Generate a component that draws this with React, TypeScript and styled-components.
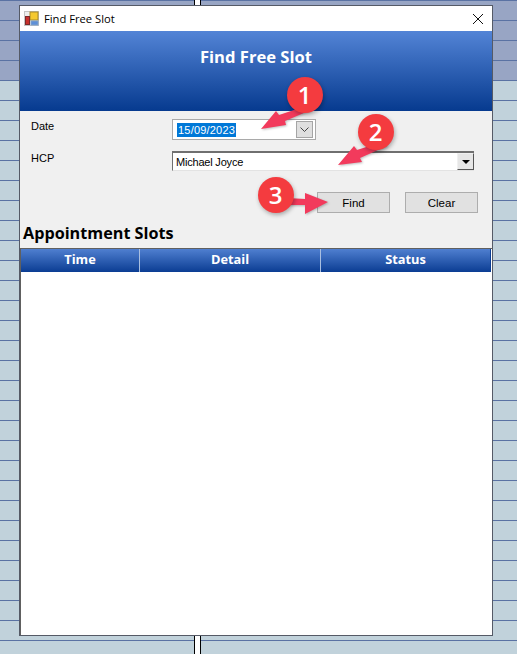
import styled, { createGlobalStyle } from "styled-components";

const GlobalStyle = createGlobalStyle`
  html, body {
    margin: 0;
    padding: 0;
  }
  * {
    box-sizing: border-box;
  }
`;

// the spreadsheet-looking app behind the dialog
const Desktop = styled.div`
  position: relative;
  width: 100%;
  height: 654px;
  overflow: hidden;
  padding: 5px 0 0 19px;
  font-family: "Liberation Sans", Arial, sans-serif;
  background:
    linear-gradient(
        to right,
        transparent 194px,
        #000 194px,
        #000 195px,
        #fff 195px,
        #fff 200px,
        #000 200px,
        #000 201px,
        transparent 201px
      ),
    repeating-linear-gradient(
      to bottom,
      #5a72a3 0,
      #5a72a3 1px,
      transparent 1px,
      transparent 20px
    ),
    linear-gradient(to bottom, #98a5c4 80px, #c1d2db 80px);
`;

const Dialog = styled.div`
  display: flex;
  flex-direction: column;
  width: 474px;
  height: 631px;
  border: 1px solid #555a66;
  background: #f0f0f0;
`;

const TitleBar = styled.div`
  display: flex;
  align-items: center;
  height: 25px;
  padding: 0 9px 0 4px;
  background: #fff;
`;

const TitleText = styled.span`
  margin-left: 5px;
  font-family: "Open Sans", sans-serif;
  font-size: 11.2px;
  color: #000;
  flex: 1;
`;

const Banner = styled.div`
  display: flex;
  align-items: center;
  justify-content: center;
  height: 80px;
  padding-bottom: 30px;
  background: linear-gradient(to bottom, #5384d6, #063a8f);
  color: #fff;
  font-family: "Open Sans", sans-serif;
  font-size: 16.6px;
  font-weight: 700;
`;

const Form = styled.div`
  display: flex;
  flex-direction: column;
  padding: 8px 0 0 11px;
`;

const FormRow = styled.div<{ $gap?: number; $height: number }>`
  display: flex;
  height: ${(p) => p.$height}px;
  margin-top: ${(p) => p.$gap ?? 0}px;
`;

const FieldLabel = styled.label`
  width: 141px;
  font-size: 11px;
  line-height: 14px;
  color: #000;
`;

const DateBox = styled.div`
  display: flex;
  align-items: center;
  width: 144px;
  height: 21px;
  padding: 0 1px 0 4px;
  border: 1px solid #a9a9a9;
  background: #fff;
  font-size: 11px;
`;

const Selected = styled.span`
  flex: 1;
  span {
    display: inline-block;
    padding: 0 1px;
    background: #0078d7;
    color: #fff;
    letter-spacing: 0.2px;
    line-height: 14px;
  }
`;

const DateDrop = styled.div`
  display: flex;
  align-items: center;
  justify-content: center;
  width: 17px;
  height: 17px;
  margin-right: 1px;
  border: 1px solid #a5a5a5;
  background: #dfdfdf;
`;

const ComboBox = styled.div`
  display: flex;
  align-items: center;
  justify-content: space-between;
  width: 302px;
  height: 20px;
  padding-left: 3px;
  border-style: solid;
  border-width: 2px 0 1px 1px;
  border-color: #6f6f6f #e3e3e3 #e3e3e3 #6f6f6f;
  background: #fff;
  font-size: 11px;
  letter-spacing: -0.2px;
  color: #000;
`;

const ComboDrop = styled.div`
  display: flex;
  align-items: center;
  justify-content: center;
  width: 17px;
  height: 17px;
  border-style: solid;
  border-width: 1px;
  border-color: #f0f0f0 #555 #555 #f0f0f0;
  background: #e6e6e6;
`;

const Triangle = styled.i`
  width: 0;
  height: 0;
  border-left: 4px solid transparent;
  border-right: 4px solid transparent;
  border-top: 4px solid #000;
`;

const Actions = styled.div`
  display: flex;
  justify-content: flex-end;
  gap: 15px;
  width: 100%;
  margin-top: 21px;
  padding-right: 14px;
`;

const ActionButton = styled.button`
  width: 73px;
  height: 21px;
  padding: 0;
  border: 1px solid #adadad;
  background: #e1e1e1;
  font-family: "Liberation Sans", Arial, sans-serif;
  font-size: 11.5px;
  color: #000;
`;

const SectionTitle = styled.h2`
  margin: 11px 0 5px 3px;
  font-family: "Open Sans", sans-serif;
  font-size: 16.2px;
  line-height: 19px;
  font-weight: 700;
  color: #000;
`;

const Grid = styled.div`
  flex: 1;
  display: flex;
  flex-direction: column;
  border-top: 1px solid #606060;
  border-left: 1px solid #606060;
  background: #fff;
`;

const GridHead = styled.div`
  display: grid;
  grid-template-columns: 119px 181px 170px;
  height: 23px;
`;

const GridCol = styled.div`
  display: flex;
  align-items: center;
  justify-content: center;
  padding-bottom: 3px;
  background: linear-gradient(to bottom, #4f7fd0, #0b3d93);
  border-right: 1px solid #a9bfe0;
  color: #fff;
  font-family: "Open Sans", sans-serif;
  font-size: 12.8px;
  font-weight: 700;
  &:last-child {
    border-right: 1px solid #0b3d93;
  }
`;

const Callout = styled.div<{ $x: number; $y: number }>`
  position: absolute;
  left: ${(p) => p.$x - 18}px;
  top: ${(p) => p.$y - 18}px;
  display: flex;
  align-items: center;
  justify-content: center;
  width: 36px;
  height: 36px;
  border-radius: 50%;
  background: #f43b3f;
  box-shadow: 1px 2px 4px rgba(0, 0, 0, 0.3);
  color: #fff;
  font-family: "Open Sans", sans-serif;
  font-size: 24px;
  font-weight: 600;
`;

const ArrowLayer = styled.svg`
  position: absolute;
  left: 0;
  top: 0;
  width: 517px;
  height: 654px;
  filter: drop-shadow(1px 1px 1px rgba(0, 0, 0, 0.25));
`;

const arrows = [
  "309,105 311,110 285,121 286,125 261,129 276,111 279,115",
  "385,141 387,146 360,158 362,162 338,165 354,146 357,150",
  "287,198 305,199 305,193 328,202 305,214 305,205 287,205",
];

const callouts = [
  { n: 1, x: 304.5, y: 94.5 },
  { n: 2, x: 375.5, y: 131.5 },
  { n: 3, x: 275.5, y: 194.5 },
];

function AppIcon() {
  return (
    <svg width="15" height="15" viewBox="0 0 15 15">
      <rect x="0.5" y="0.5" width="14" height="14" fill="#eee" stroke="#c4c4c4" />
      <rect x="6" y="1" width="8" height="8" fill="#f5c92f" stroke="#a88a2a" />
      <rect x="1.5" y="5.5" width="4" height="8" fill="#c8302c" stroke="#7c2a2a" />
      <rect x="7" y="10" width="7" height="4" fill="#5d8fd8" stroke="#7f9fc8" />
    </svg>
  );
}

export default function App() {
  return (
    <Desktop>
      <GlobalStyle />
      <Dialog>
        <TitleBar>
          <AppIcon />
          <TitleText>Find Free Slot</TitleText>
          <svg width="10" height="10" viewBox="0 0 10 10">
            <path d="M0 0 L10 10 M10 0 L0 10" stroke="#111" strokeWidth="1" />
          </svg>
        </TitleBar>
        <Banner>Find Free Slot</Banner>
        <Form>
          <FormRow $height={21}>
            <FieldLabel>Date</FieldLabel>
            <DateBox>
              <Selected>
                <span>15/09/2023</span>
              </Selected>
              <DateDrop>
                <svg width="9" height="5" viewBox="0 0 9 5">
                  <path d="M0.5 0.5 L4.5 4.5 L8.5 0.5" fill="none" stroke="#444" />
                </svg>
              </DateDrop>
            </DateBox>
          </FormRow>
          <FormRow $gap={11} $height={20}>
            <FieldLabel>HCP</FieldLabel>
            <ComboBox>
              Michael Joyce
              <ComboDrop>
                <Triangle />
              </ComboDrop>
            </ComboBox>
          </FormRow>
          <Actions>
            <ActionButton>Find</ActionButton>
            <ActionButton>Clear</ActionButton>
          </Actions>
        </Form>
        <SectionTitle>Appointment Slots</SectionTitle>
        <Grid>
          <GridHead>
            <GridCol>Time</GridCol>
            <GridCol>Detail</GridCol>
            <GridCol>Status</GridCol>
          </GridHead>
        </Grid>
      </Dialog>
      <ArrowLayer viewBox="0 0 517 654">
        {arrows.map((pts) => (
          <polygon key={pts} points={pts} fill="#f23a5c" />
        ))}
      </ArrowLayer>
      {callouts.map((c) => (
        <Callout key={c.n} $x={c.x} $y={c.y}>
          {c.n}
        </Callout>
      ))}
    </Desktop>
  );
}
